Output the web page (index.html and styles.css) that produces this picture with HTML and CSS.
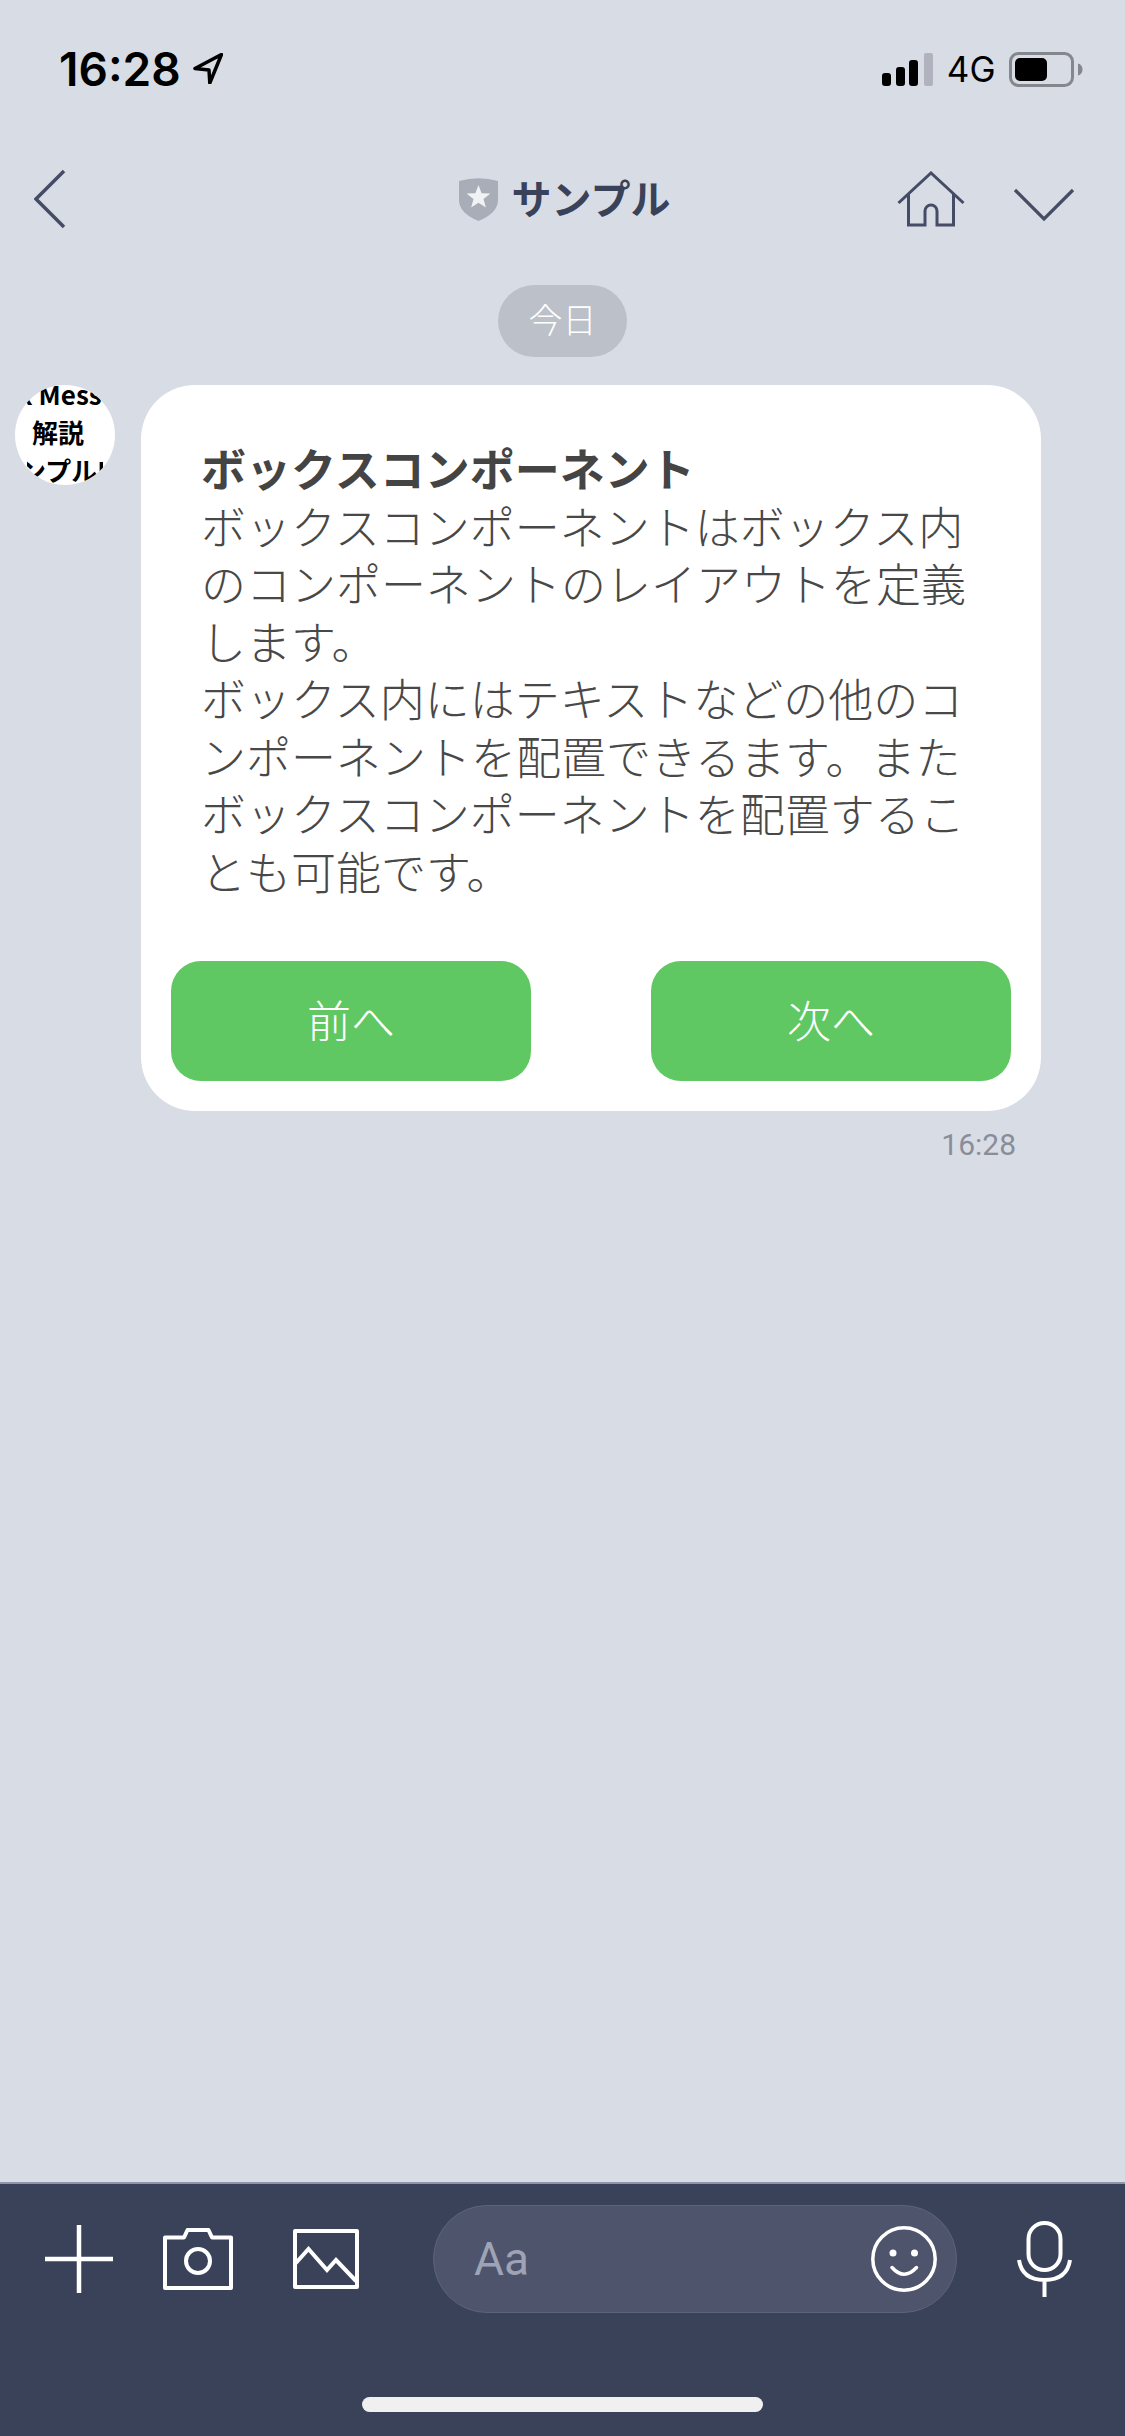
FILE: index.html
```html
<!DOCTYPE html>
<html lang="ja">
<head>
<meta charset="utf-8">
<title>サンプル</title>
<link rel="stylesheet" href="styles.css">
</head>
<body>
<div class="screen">
  <header class="status">
    <div class="status-left">
      <span class="clock">16:28</span>
      <svg class="icon-location" width="30" height="31" viewBox="0 0 30 31"><path d="M28.5 1.5 2 15.5l14 1.5.8 13z" fill="none" stroke="#000" stroke-width="3.500" stroke-linejoin="round"/></svg>
    </div>
    <div class="status-right">
      <svg width="52" height="33" viewBox="0 0 52 33"><rect x="0" y="20" width="9" height="13" rx="3"/><rect x="14" y="14" width="9" height="19" rx="3"/><rect x="27" y="7" width="9" height="26" rx="3"/><rect x="42" y="0" width="9" height="33" rx="2" fill="#b0b3bd"/></svg>
      <span class="network">4G</span>
      <svg class="icon-battery" width="74" height="35" viewBox="0 0 74 35"><rect x="1.5" y="1.5" width="62" height="32" rx="8" fill="none" stroke="#85878f" stroke-width="3"/><rect x="6" y="6" width="32" height="23" rx="5"/><path d="M69 11.5c3 .8 4.5 3 4.5 6s-1.500 5.200-4.500 6z" fill="#85878f"/></svg>
    </div>
  </header>

  <nav class="nav">
    <div class="nav-left">
      <svg class="icon-back" width="32" height="60" viewBox="0 0 32 60"><path d="M30 2 2 30l28 28" fill="none" stroke="#444c66" stroke-width="3.500"/></svg>
    </div>
    <div class="nav-title">
      <svg width="39" height="44" viewBox="0 0 39 44"><path d="M0 4Q19.500-1.500 39 4V23Q39 36 19.500 44 0 36 0 23Z" fill="#a8adb8"/><path d="m19.500 8 3.100 8.200 8.800.4-6.900 5.500 2.400 8.500-7.400-4.900-7.400 4.900 2.400-8.500-6.900-5.500 8.800-.4z" fill="#f1f2f4"/></svg>
      <span class="nav-name">サンプル</span>
    </div>
    <div class="nav-right">
      <svg width="68" height="56" viewBox="0 0 68 56"><path d="M1.500 32 34 2l32.500 30M11.500 23v31H28V40a6 6 0 0 1 12 0v14h16.500V23" fill="none" stroke="#444c66" stroke-width="3"/></svg>
      <svg class="icon-more" width="62" height="34" viewBox="0 0 62 34"><path d="M2 2l29 29L60 2" fill="none" stroke="#444c66" stroke-width="3.200"/></svg>
    </div>
  </nav>

  <main class="chat">
    <div class="date-pill">今日</div>
    <div class="message">
      <div class="avatar">
        <div class="avatar-clip">
          <div class="avatar-line avatar-line-first">Flex Message</div>
          <div class="avatar-line avatar-line-mid">解説</div>
          <div class="avatar-line avatar-line-last">サンプルDemo</div>
        </div>
      </div>
      <div class="bubble">
        <div class="bubble-text">
          <div class="bubble-title">ボックスコンポーネント</div>
          <div>ボックスコンポーネントはボックス内<br>のコンポーネントのレイアウトを定義<br>します。<br>ボックス内にはテキストなどの他のコ<br>ンポーネントを配置できるます。また<br>ボックスコンポーネントを配置するこ<br>とも可能です。</div>
        </div>
        <div class="bubble-actions">
          <div class="button">前へ</div>
          <div class="button">次へ</div>
        </div>
      </div>
    </div>
    <div class="sent-time">16:28</div>
  </main>

  <footer class="composer">
    <div class="composer-row">
      <svg class="icon-plus" width="68" height="68" viewBox="0 0 68 68"><path d="M34 0v68M0 34h68" stroke="#fff" stroke-width="4.500" fill="none"/></svg>
      <svg class="icon-camera" width="70" height="62" viewBox="0 0 70 62"><path d="M2 9.500h19L24.500 2h21L49 9.500h19V60H2z" fill="none" stroke="#fff" stroke-width="4" stroke-linejoin="round"/><circle cx="35" cy="33" r="12" fill="none" stroke="#fff" stroke-width="4"/></svg>
      <svg class="icon-image" width="66" height="60" viewBox="0 0 66 60"><rect x="2" y="2" width="62" height="56" fill="none" stroke="#fff" stroke-width="4" stroke-linejoin="round"/><path d="M2 35 15.500 20 34 41l9-10 20 21" fill="none" stroke="#fff" stroke-width="4"/></svg>
      <div class="input">
        <span class="placeholder">Aa</span>
        <svg width="66" height="66" viewBox="0 0 66 66"><circle cx="33" cy="33" r="31.200" fill="none" stroke="#fff" stroke-width="3.500"/><circle cx="22" cy="27" r="3.500" fill="#fff"/><circle cx="43.500" cy="27" r="3.500" fill="#fff"/><path d="M21 41.500Q33 55 45.500 41.500" fill="none" stroke="#fff" stroke-width="3.500" stroke-linecap="round"/></svg>
      </div>
      <svg class="icon-mic" width="55" height="76" viewBox="0 0 55 76"><rect x="11.500" y="2" width="32" height="47" rx="16" fill="none" stroke="#fff" stroke-width="4"/><path d="M2 39Q5 59 27.500 59T53 39M27.500 59v17" fill="none" stroke="#fff" stroke-width="4"/></svg>
    </div>
    <div class="home-indicator"></div>
  </footer>
</div>
</body>
</html>
```

FILE: styles.css
```css
* { box-sizing: border-box; }

html, body {
  margin: 0;
  padding: 0;
}

body {
  width: 1125px;
  height: 2436px;
  overflow: hidden;
  background: #d8dce5;
  font-family: "Noto Sans CJK JP", "Noto Sans", sans-serif;
}

.screen {
  display: flex;
  flex-direction: column;
  width: 1125px;
  height: 2436px;
}

/* status bar */
.status {
  display: flex;
  flex: none;
  align-items: center;
  justify-content: space-between;
  height: 138px;
  padding: 0 42px 0 59px;
}

.status-left,
.status-right {
  display: flex;
  align-items: center;
}

.status-right { gap: 12.500px; }

.clock {
  font-family: Inter, "Liberation Sans", sans-serif;
  font-size: 46px;
  font-weight: 600;
  color: #000;
}

.icon-location { margin-left: 12px; margin-top: -2px; }

.network {
  font-family: Inter, "Liberation Sans", sans-serif;
  font-size: 35px;
  color: #000;
}

.icon-battery { margin-left: 1px; }

/* navigation */
.nav {
  display: grid;
  flex: none;
  grid-template-columns: 1fr auto 1fr;
  align-items: center;
  height: 122px;
  padding: 0 50.500px;
}

.nav-left,
.nav-title,
.nav-right { display: flex; align-items: center; }

.icon-back { margin-left: -16.500px; }

.nav-title {
  gap: 14px;
  padding-left: 4px;
}

.nav-name {
  margin-top: -5px;
  font-size: 40px;
  font-weight: 700;
  line-height: 1;
  color: #3a4259;
}

.nav-right {
  justify-content: flex-end;
  gap: 47.500px;
}

.icon-more { margin-top: 12px; }

/* chat */
.chat {
  display: flex;
  flex: 1;
  flex-direction: column;
  min-height: 0;
  padding-top: 25px;
}

.date-pill {
  align-self: center;
  width: 129px;
  height: 72px;
  border-radius: 36px;
  background: #bcc0c9;
  font-size: 34px;
  font-weight: 300;
  line-height: 68px;
  text-align: center;
  color: #fff;
}

.message {
  display: flex;
  gap: 26px;
  margin-top: 28px;
  padding-left: 15px;
}

.avatar {
  display: flex;
  flex: none;
  justify-content: center;
  width: 100px;
  height: 100px;
  overflow: hidden;
  border-radius: 50%;
  background: #fff;
}

.avatar-clip {
  width: 76px;
  height: 100px;
  overflow: hidden;
}

.avatar-line {
  font-size: 26px;
  font-weight: 700;
  line-height: 38px;
  white-space: nowrap;
  color: #000;
}

.avatar-line-first {
  margin-top: -10px;
  margin-left: -47px;
}

.avatar-line-mid { margin-left: 5px; }

.avatar-line-last { margin-left: -33px; }

.bubble {
  display: flex;
  flex-direction: column;
  width: 900px;
  padding-bottom: 30px;
  border-radius: 54px;
  background: #fff;
}

.bubble-text {
  padding: 54px 0 0 60px;
  font-size: 45px;
  font-weight: 300;
  line-height: 57.500px;
  white-space: nowrap;
  color: #484848;
}

.bubble-title {
  font-weight: 700;
  color: #444;
}

.bubble-actions {
  display: flex;
  justify-content: space-between;
  margin-top: 62px;
  padding: 0 30px;
}

.button {
  width: 360px;
  height: 120px;
  border-radius: 30px;
  background: #5fc862;
  font-size: 44px;
  font-weight: 300;
  line-height: 116px;
  text-align: center;
  color: #fff;
}

.sent-time {
  align-self: flex-end;
  margin-top: 17px;
  padding-right: 109px;
  font-family: Roboto, "Liberation Sans", sans-serif;
  font-size: 30px;
  line-height: 34px;
  color: #8a8d99;
}

/* composer */
.composer {
  flex: none;
  height: 254px;
  border-top: 2px solid #8f95a8;
  background: #3a4259;
}

.composer-row {
  display: flex;
  align-items: center;
  height: 108px;
  margin-top: 21px;
  padding-left: 45px;
}

.icon-plus { flex: none; }
.icon-camera { flex: none; margin-left: 50px; }
.icon-image { flex: none; margin-left: 60px; }
.icon-mic { flex: none; margin-left: 60px; }

.input {
  display: flex;
  flex: none;
  align-items: center;
  justify-content: space-between;
  width: 524px;
  height: 108px;
  margin-left: 74px;
  padding: 0 19px 0 40px;
  border: 1.500px solid #5c6379;
  border-radius: 54px;
  background: #4d546c;
}

.placeholder {
  font-family: Roboto, "Liberation Sans", sans-serif;
  font-size: 46px;
  color: #9ea3b5;
}

.home-indicator {
  width: 401px;
  height: 15px;
  margin: 84px auto 0;
  border-radius: 8px;
  background: #f0f0f0;
}
```
